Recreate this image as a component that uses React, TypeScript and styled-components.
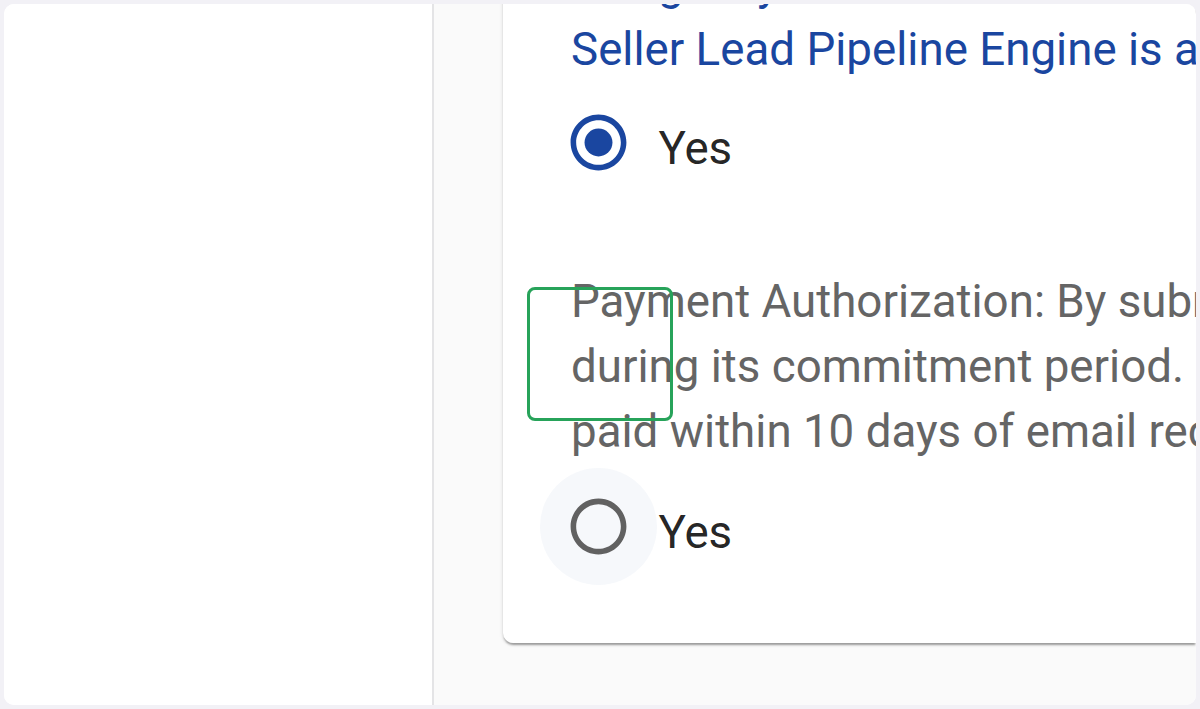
import React from "react";
import styled, { createGlobalStyle } from "styled-components";

const Global = createGlobalStyle`
  html, body { margin: 0; padding: 0; }
  body {
    background: #f2f1f6;
    font-family: Roboto, "Liberation Sans", Arial, sans-serif;
    -webkit-font-smoothing: antialiased;
  }
`;

const Frame = styled.div`
  position: relative;
  width: 1200px;
  height: 709px;
  padding: 4px;
  box-sizing: border-box;
`;

const Window = styled.div`
  display: flex;
  height: 100%;
  background: #ffffff;
  border-radius: 10px;
  overflow: hidden;
`;

const Sidebar = styled.aside`
  width: 428px;
  flex: none;
  background: #ffffff;
  border-right: 2px solid #e4e4e6;
`;

const Main = styled.main`
  flex: 1;
  min-width: 0;
  background: #fafafa;
  padding-left: 69px;
  overflow: hidden;
`;

const Card = styled.section`
  margin-top: -70px;
  padding: 18px 0 58.5px 68px;
  background: #ffffff;
  border-radius: 10px 0 0 10px;
  box-shadow: 0 3px 2px -1px rgba(0, 0, 0, 0.28), 0 2px 3px 0 rgba(0, 0, 0, 0.1),
    0 1px 5px 0 rgba(0, 0, 0, 0.08);
`;

const Text = styled.p<{ $tone: "blue" | "grey" }>`
  margin: 0;
  font-size: 45.7px;
  line-height: 65px;
  white-space: nowrap;
  color: ${(p) => (p.$tone === "blue" ? "#1a46a0" : "#656565")};
`;

const Question = styled(Text)`
  margin-bottom: 1.5px;
`;

const Paragraph = styled(Text)`
  margin-top: 68.5px;
  margin-bottom: 3.5px;
`;

const RadioRow = styled.label`
  display: flex;
  align-items: center;
  margin-left: -30.6px;
`;

const RadioHit = styled.span<{ $hover?: boolean }>`
  display: flex;
  align-items: center;
  justify-content: center;
  width: 117px;
  height: 117px;
  border-radius: 50%;
  flex: none;
  background: ${(p) => (p.$hover ? "rgba(26, 70, 160, 0.04)" : "transparent")};
`;

const RadioLabel = styled.span`
  font-size: 45.7px;
  line-height: 65px;
  padding-top: 12px;
  padding-left: 1px;
  color: rgba(0, 0, 0, 0.87);
`;

const Highlight = styled.div`
  position: absolute;
  left: 527px;
  top: 287px;
  width: 146px;
  height: 134px;
  box-sizing: border-box;
  border: 3.5px solid #27a35a;
  border-radius: 8px;
  pointer-events: none;
`;

const RadioIcon: React.FC<{ checked: boolean }> = ({ checked }) => (
  <svg width="67" height="67" viewBox="0 0 24 24" aria-hidden="true">
    <path
      fill={checked ? "#1a46a0" : "#616161"}
      d="M12 2C6.48 2 2 6.48 2 12s4.48 10 10 10 10-4.48 10-10S17.52 2 12 2zm0 18c-4.42 0-8-3.58-8-8s3.58-8 8-8 8 3.58 8 8-3.58 8-8 8z"
    />
    {checked && <circle cx="12" cy="12" r="5" fill="#1a46a0" />}
  </svg>
);

export default function App() {
  return (
    <>
      <Global />
      <Frame>
        <Window>
          <Sidebar />
          <Main>
            <Card>
              <Question $tone="blue">
                Its agency consent: I understand and agree that the
                <br />
                Seller Lead Pipeline Engine is authorized to contact me.
              </Question>
              <RadioRow>
                <RadioHit>
                  <RadioIcon checked />
                </RadioHit>
                <RadioLabel>Yes</RadioLabel>
              </RadioRow>
              <Paragraph $tone="grey">
                Payment Authorization: By submitting this form, I authorize charges
                <br />
                during its commitment period. Charges are billed monthly and must be
                <br />
                paid within 10 days of email receipt.
              </Paragraph>
              <RadioRow>
                <RadioHit $hover>
                  <RadioIcon checked={false} />
                </RadioHit>
                <RadioLabel>Yes</RadioLabel>
              </RadioRow>
            </Card>
          </Main>
        </Window>
        <Highlight />
      </Frame>
    </>
  );
}
